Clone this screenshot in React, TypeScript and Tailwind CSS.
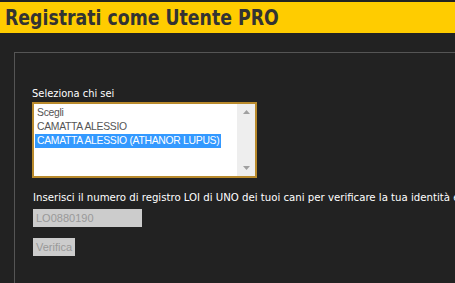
const options = ['Scegli', 'CAMATTA ALESSIO', 'CAMATTA ALESSIO (ATHANOR LUPUS)'];

const Listbox = () => {
  return (
    <div className="flex h-[76px] w-[225px] border-2 border-[#b98a2c] bg-white">
      <div className="flex-1 pl-[1px] pt-[2px] font-['Liberation_Sans',Arial,sans-serif] text-[10.4px] leading-[14px] tracking-[-0.3px]">
        {options.map((o, i) => (
          <div
            key={o}
            className={
              i === 2
                ? 'w-fit whitespace-nowrap bg-[#3399ff] pl-[2px] pr-[2px] text-white'
                : 'whitespace-nowrap pl-[2px] text-[#555]'
            }
          >
            {o}
          </div>
        ))}
      </div>
      <div className="flex w-[18px] flex-col items-center justify-between bg-[#eeeeee] py-[6px]">
        <svg width="7" height="4" viewBox="0 0 7 4">
          <path d="M0 4 L3.5 0 L7 4 Z" fill="#a0a0a0" />
        </svg>
        <svg width="7" height="4" viewBox="0 0 7 4">
          <path d="M0 0 L3.5 4 L7 0 Z" fill="#a0a0a0" />
        </svg>
      </div>
    </div>
  );
};

export default function App() {
  return (
    <div className="h-[283px] overflow-hidden bg-[#222222] pt-[2px]">
      <div className="flex h-[31px] items-center bg-[#ffcc00] pl-[5px]">
        <h1 className="origin-left scale-x-[0.875] whitespace-nowrap font-['DejaVu_Sans_Condensed','DejaVu_Sans',sans-serif] text-[22px] font-bold leading-none text-[#333333]">
          Registrati come Utente PRO
        </h1>
      </div>
      <div className="ml-[14px] mt-[19px] h-[300px] border-l border-t border-[#555555] pl-[17px] pt-[34px] font-['DejaVu_Sans_Condensed','DejaVu_Sans',sans-serif] text-[11px] text-white">
        <p className="leading-[13px]">Seleziona chi sei</p>
        <div className="mt-[2px]">
          <Listbox />
        </div>
        <p className="mt-[13px] whitespace-nowrap pl-[1px] text-[11.3px] leading-[13px]">
          Inserisci il numero di registro LOI di UNO dei tuoi cani per verificare la tua identità e
        </p>
        <div className="ml-[1px] mt-[5px] flex h-[18px] w-[109px] items-center bg-[#cccccc] pl-[3px] font-['Liberation_Sans',Arial,sans-serif] text-[11px] text-[#999999]">
          LO0880190
        </div>
        <div className="ml-[1px] mt-[11px] flex h-[18px] w-[42px] items-center justify-center bg-[#cccccc] font-['Liberation_Sans',Arial,sans-serif] text-[11px] text-[#999999]">
          Verifica
        </div>
      </div>
    </div>
  );
}
